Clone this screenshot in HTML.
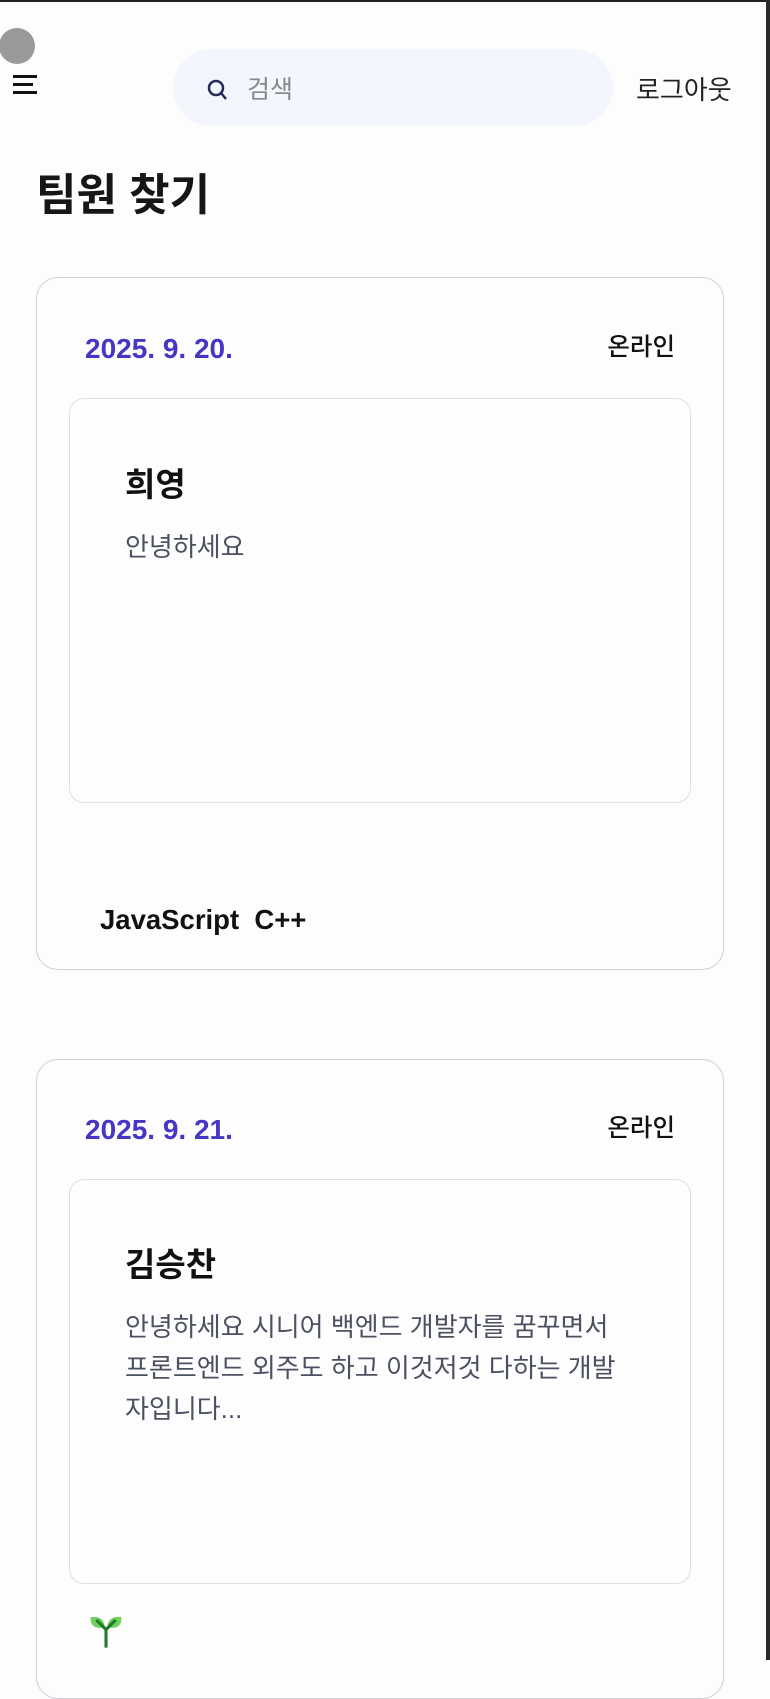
<!DOCTYPE html>
<html><head><meta charset="utf-8"><style>
*{margin:0;padding:0;box-sizing:border-box}
body{width:770px;height:1660px;overflow:hidden;background:#fdfdfe;font-family:"Liberation Sans","Noto Sans CJK KR",sans-serif;position:relative;color:#111}
.abs{position:absolute}
.card{position:absolute;left:36px;width:688px;border:1.5px solid #cfcfd4;border-radius:22px;background:#fdfdfe}
.inner{position:absolute;left:32px;width:622px;border:1.5px solid #dedee3;border-radius:15px}
.date{position:absolute;left:48px;font-size:28px;font-weight:600;color:#4636c4;line-height:30px}
.on{position:absolute;right:48px;font-size:24.5px;font-weight:500;color:#111;line-height:30px}
.name{position:absolute;left:55px;font-size:33px;font-weight:700;color:#111;line-height:36px}
.desc{position:absolute;left:55px;font-size:26px;color:#4b5160;line-height:41px;width:560px;white-space:nowrap}
</style></head><body>
<div class="abs" style="left:0;top:0;width:770px;height:2px;background:#222"></div>
<div class="abs" style="right:0;top:0;width:4px;height:1660px;background:#2a2a2a"></div>
<div class="abs" style="left:-1px;top:28px;width:36px;height:36px;border-radius:50%;background:#999"></div>
<div class="abs" style="left:13px;top:75px;width:24px;height:2.5px;background:#111"></div>
<div class="abs" style="left:13px;top:83px;width:20px;height:2.5px;background:#111"></div>
<div class="abs" style="left:13px;top:91px;width:24px;height:2.5px;background:#111"></div>
<div class="abs" style="left:173px;top:49px;width:440px;height:77px;border-radius:40px;background:#f3f6fd"></div>
<svg class="abs" style="left:206px;top:78px" width="24" height="24" viewBox="0 0 24 24"><circle cx="10" cy="10" r="7" fill="none" stroke="#222a55" stroke-width="2.5"/><line x1="15" y1="15" x2="20" y2="21" stroke="#222a55" stroke-width="2.5"/></svg>
<div class="abs" style="left:247px;top:75px;font-size:25px;color:#888;line-height:30px">검색</div>
<div class="abs" style="left:636px;top:75px;font-size:26px;color:#222;line-height:30px">로그아웃</div>
<div class="abs" style="left:36px;top:171px;font-size:44px;font-weight:700;color:#161616;line-height:50px">팀원 찾기</div>

<div class="card" style="top:277px;height:693px">
<div class="date" style="top:56px">2025. 9. 20.</div>
<div class="on" style="top:55px">온라인</div>
<div class="inner" style="top:120px;height:405px">
<div class="name" style="top:68px">희영</div>
<div class="desc" style="top:128px">안녕하세요</div>
</div>
<div class="abs" style="left:63px;top:627px;font-size:27.5px;font-weight:600;color:#111;line-height:30px">JavaScript&nbsp;&nbsp;C++</div>
</div>

<div class="card" style="top:1059px;height:640px">
<div class="date" style="top:55px">2025. 9. 21.</div>
<div class="on" style="top:54px">온라인</div>
<div class="inner" style="top:119px;height:405px">
<div class="name" style="top:67px">김승찬</div>
<div class="desc" style="top:127px">안녕하세요 시니어 백엔드 개발자를 꿈꾸면서<br>프론트엔드 외주도 하고 이것저것 다하는 개발<br>자입니다...</div>
</div>
<svg class="abs" style="left:50px;top:553px" width="38" height="36" viewBox="0 0 26 26"><path d="M12 10 C7 12 1 10 2 3 C8 2 12 5 12 10Z" fill="#6fcf5f"/><path d="M14 10 C19 12 25 10 24 3 C18 2 14 5 14 10Z" fill="#6fcf5f"/><path d="M6 5 L13 12 L20 5 M13 12 L13 25" stroke="#1f7a2a" stroke-width="2.2" fill="none"/></svg>
</div>
</body></html>
